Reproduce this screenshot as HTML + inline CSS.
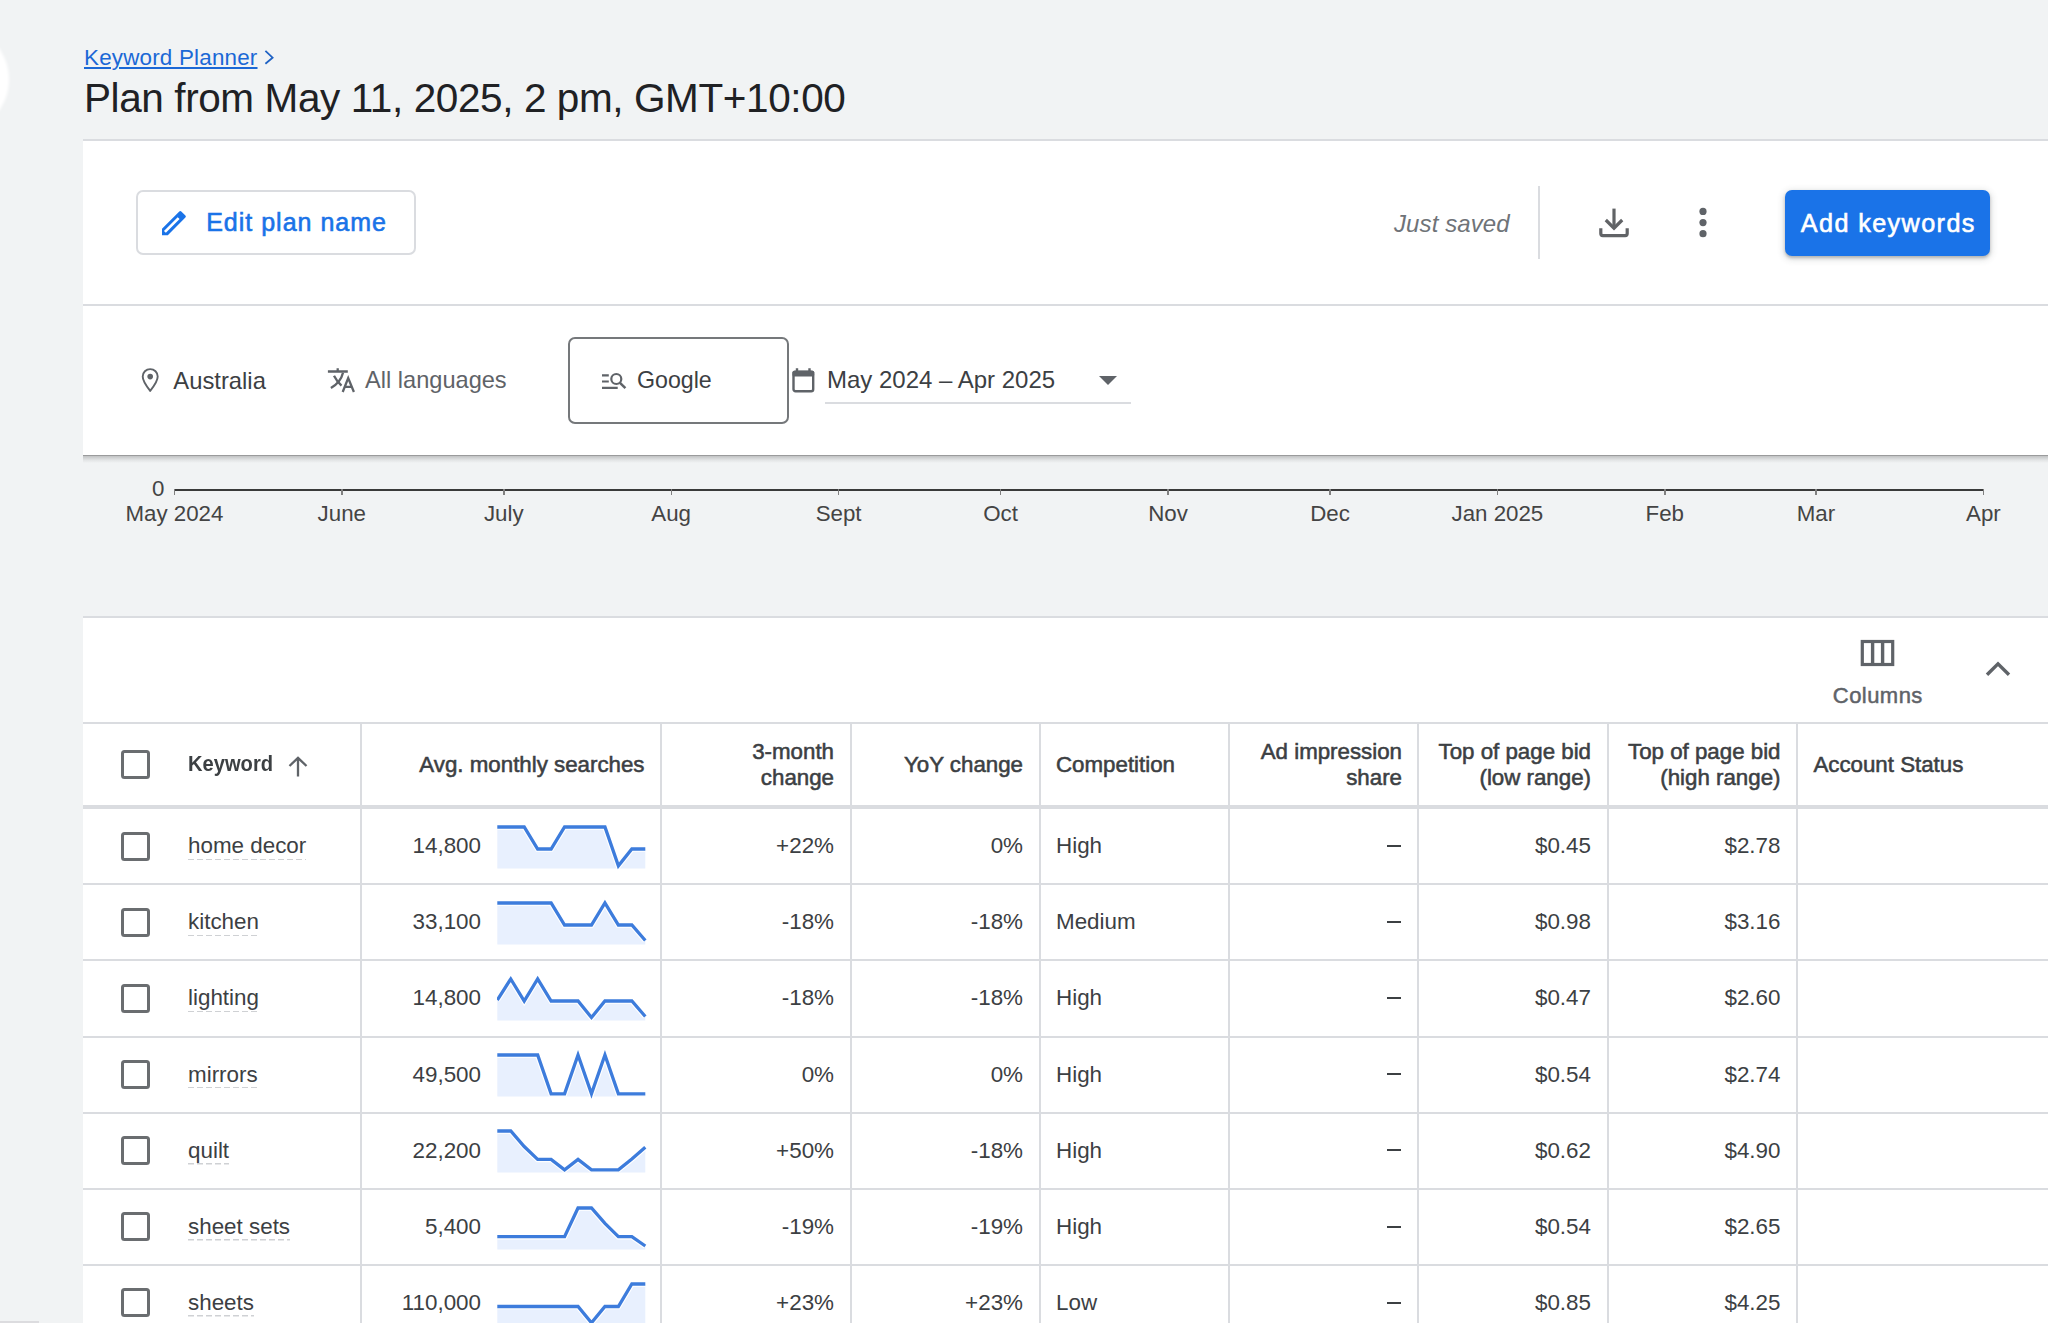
<!DOCTYPE html>
<html><head><meta charset="utf-8"><title>Keyword Planner</title><style>
*{margin:0;padding:0;box-sizing:content-box}
html,body{width:2048px;height:1323px;overflow:hidden;background:#f1f3f4;font-family:"Liberation Sans", sans-serif;position:relative}
.t{position:absolute;white-space:nowrap}
.blob{position:absolute;left:-100px;top:24.5px;width:109px;height:109px;border-radius:50%;background:#fff;filter:blur(1.5px)}
.sb{position:absolute;left:0;top:1321px;width:39px;height:2px;background:#dcdcdf}
.card1{position:absolute;left:83px;top:139px;width:1965px;height:316px;background:#fff;border-top:2px solid #dadce0;box-sizing:border-box}
.sh1{position:absolute;left:83px;top:455px;width:1965px;height:1.2px;background:rgba(0,0,0,.36)}
.sh2{position:absolute;left:83px;top:456.2px;width:1965px;height:6.5px;background:linear-gradient(rgba(0,0,0,.2),rgba(0,0,0,.06) 60%,rgba(0,0,0,0))}
.card2{position:absolute;left:83px;top:616px;width:1965px;height:720px;background:#fff;border-top:2px solid #dadce0;box-sizing:border-box}
</style></head>
<body>
<div class="blob"></div>
<div class="sb"></div>
<div class="t" style="left:84px;top:46.94px;font-size:22.4px;line-height:22.4px;color:#1b68d6;font-weight:400;font-style:normal;letter-spacing:0.2px;text-decoration:underline;text-decoration-thickness:1.5px;text-underline-offset:2px;">Keyword Planner</div>
<svg style="position:absolute;left:262px;top:48px" width="14" height="20" viewBox="0 0 14 20"><path d="M3.4 2.8 L10.6 9.6 L3.4 15.7" fill="none" stroke="#1f62c4" stroke-width="1.8"/></svg>
<div class="t" style="left:84px;top:77.72px;font-size:40.5px;line-height:40.5px;color:#202124;font-weight:400;font-style:normal;letter-spacing:-0.4px;">Plan from May 11, 2025, 2 pm, GMT+10:00</div>
<div class="card1"></div><div class="sh1"></div><div class="sh2"></div>
<div style="position:absolute;left:83px;top:304px;width:1965px;height:2px;background:#dadce0"></div>
<div style="position:absolute;left:136px;top:190px;width:276px;height:61px;border:2px solid #dadce0;border-radius:7px"></div>
<svg style="position:absolute;left:159px;top:207px" width="30" height="30" viewBox="0 0 30 30"><path fill-rule="evenodd" d="M3 21.8 L20.3 4.5 Q21.3 3.5 22.3 4.5 L26.4 8.6 Q27.4 9.6 26.4 10.6 L8.8 28.2 L3 28.2 Z M4.95 23.95 L6.85 25.85 L20.6 12.1 L18.7 10.2 Z" fill="#1a73e8"/></svg>
<div class="t" style="left:206.2px;top:209.84px;font-size:25px;line-height:25px;color:#1a73e8;font-weight:400;font-style:normal;letter-spacing:1.0px;-webkit-text-stroke:0.6px #1a73e8;">Edit plan name</div>
<div class="t" style="left:1394px;top:211.58px;font-size:24px;line-height:24px;color:#6f7378;font-weight:400;font-style:italic;letter-spacing:0.1px;">Just saved</div>
<div style="position:absolute;left:1538px;top:186px;width:2px;height:73px;background:#dadce0"></div>
<svg style="position:absolute;left:1596px;top:205px" width="36" height="36" viewBox="0 0 36 36"><g fill="none" stroke="#616366" stroke-width="3.2"><path d="M18 3.6 V22.5"/><path d="M9.8 15 L18 23.2 L26.2 15"/><path d="M4.8 23.2 V28.6 Q4.8 30.6 6.8 30.6 H29.2 Q31.2 30.6 31.2 28.6 V23.2"/></g></svg>
<svg style="position:absolute;left:1693px;top:203px" width="20" height="40" viewBox="0 0 20 40"><circle cx="10" cy="8.4" r="3.6" fill="#5f6368"/><circle cx="10" cy="19.6" r="3.6" fill="#5f6368"/><circle cx="10" cy="30.7" r="3.6" fill="#5f6368"/></svg>
<div style="position:absolute;left:1785px;top:190px;width:205px;height:66px;background:#1a73e8;border-radius:7px;box-shadow:0 2px 3px rgba(60,64,67,.3),0 2px 6px 2px rgba(60,64,67,.15)"></div>
<div class="t" style="left:1800.8px;top:210.67px;font-size:25.2px;line-height:25.2px;color:#ffffff;font-weight:400;font-style:normal;letter-spacing:1.4px;-webkit-text-stroke:0.6px #ffffff;">Add keywords</div>
<svg style="position:absolute;left:138px;top:366px" width="24" height="28" viewBox="0 0 24 28"><path d="M12.2 24.9 C12.2 24.9 4.7 15.6 4.7 10.6 A7.5 7.5 0 0 1 19.7 10.6 C19.7 15.6 12.2 24.9 12.2 24.9 Z" fill="none" stroke="#5f6368" stroke-width="1.9" stroke-linejoin="round"/><circle cx="12.2" cy="10.6" r="2.8" fill="#5f6368"/></svg>
<div class="t" style="left:173.3px;top:368.85px;font-size:23.8px;line-height:23.8px;color:#3c4043;font-weight:400;font-style:normal;letter-spacing:0px;">Australia</div>
<svg style="position:absolute;left:326px;top:366px" width="32" height="30" viewBox="0 0 32 30"><g fill="none" stroke="#5f6368" stroke-width="2.3"><path d="M1.9 5.5 H21.8 M11.7 2.2 V5.5"/><path d="M17 6.7 Q14.8 16 4.9 22.1"/><path d="M8 9.7 Q11 15.5 15.5 19.7"/><path d="M16.7 26 L22.2 12.1 L27.9 26 M18.7 20.9 H25.8"/></g></svg>
<div class="t" style="left:365px;top:369.02px;font-size:23.6px;line-height:23.6px;color:#5f6368;font-weight:400;font-style:normal;letter-spacing:0px;">All languages</div>
<div style="position:absolute;left:568px;top:336.6px;width:216.5px;height:83.4px;border:2px solid #75787b;border-radius:7px"></div>
<svg style="position:absolute;left:599px;top:370px" width="30" height="22" viewBox="0 0 30 22"><path d="M3 5.4 H9.8 M3 11.5 H9.8 M3 17.8 H18.7" stroke="#5f6368" stroke-width="2.2"/><circle cx="17.3" cy="9" r="5" fill="none" stroke="#5f6368" stroke-width="2.2"/><path d="M21 12.8 L26.4 18.2" stroke="#5f6368" stroke-width="2.5"/></svg>
<div class="t" style="left:637px;top:369.36px;font-size:23.2px;line-height:23.2px;color:#3c4043;font-weight:400;font-style:normal;letter-spacing:0px;">Google</div>
<svg style="position:absolute;left:790px;top:366px" width="26" height="28" viewBox="0 0 26 28"><rect x="3.5" y="5.8" width="19.7" height="19.4" rx="2" fill="none" stroke="#5f6368" stroke-width="2.4"/><rect x="2.5" y="4.8" width="21.7" height="5.6" rx="1.5" fill="#5f6368"/><path d="M7 2.2 V6 M19.5 2.2 V6" stroke="#5f6368" stroke-width="2.4"/></svg>
<div class="t" style="left:827px;top:367.68px;font-size:24.0px;line-height:24.0px;color:#3c4043;font-weight:400;font-style:normal;letter-spacing:0px;">May 2024 – Apr 2025</div>
<svg style="position:absolute;left:1097px;top:374px" width="22" height="13" viewBox="0 0 22 13"><path d="M2 2 H20 L11 11 Z" fill="#5f6368"/></svg>
<div style="position:absolute;left:825px;top:402px;width:306px;height:2px;background:#dadce0"></div>
<div style="position:absolute;left:174px;top:488.5px;width:1810px;height:2.4px;background:#3a3a3a"></div>
<div style="position:absolute;left:173.7px;top:489px;width:1.6px;height:6px;background:#808080"></div>
<div class="t" style="left:-125.60000000000002px;width:600px;text-align:center;top:502.72px;font-size:22.3px;line-height:22.3px;color:#444444;font-weight:400;font-style:normal;letter-spacing:0px;">May 2024</div>
<div style="position:absolute;left:341.1px;top:489px;width:1.6px;height:6px;background:#808080"></div>
<div class="t" style="left:41.80000000000001px;width:600px;text-align:center;top:502.72px;font-size:22.3px;line-height:22.3px;color:#444444;font-weight:400;font-style:normal;letter-spacing:0px;">June</div>
<div style="position:absolute;left:503.1px;top:489px;width:1.6px;height:6px;background:#808080"></div>
<div class="t" style="left:203.8px;width:600px;text-align:center;top:502.72px;font-size:22.3px;line-height:22.3px;color:#444444;font-weight:400;font-style:normal;letter-spacing:0px;">July</div>
<div style="position:absolute;left:670.5px;top:489px;width:1.6px;height:6px;background:#808080"></div>
<div class="t" style="left:371.20000000000005px;width:600px;text-align:center;top:502.72px;font-size:22.3px;line-height:22.3px;color:#444444;font-weight:400;font-style:normal;letter-spacing:0px;">Aug</div>
<div style="position:absolute;left:837.9px;top:489px;width:1.6px;height:6px;background:#808080"></div>
<div class="t" style="left:538.6000000000001px;width:600px;text-align:center;top:502.72px;font-size:22.3px;line-height:22.3px;color:#444444;font-weight:400;font-style:normal;letter-spacing:0px;">Sept</div>
<div style="position:absolute;left:999.9px;top:489px;width:1.6px;height:6px;background:#808080"></div>
<div class="t" style="left:700.6000000000001px;width:600px;text-align:center;top:502.72px;font-size:22.3px;line-height:22.3px;color:#444444;font-weight:400;font-style:normal;letter-spacing:0px;">Oct</div>
<div style="position:absolute;left:1167.3px;top:489px;width:1.6px;height:6px;background:#808080"></div>
<div class="t" style="left:868.0px;width:600px;text-align:center;top:502.72px;font-size:22.3px;line-height:22.3px;color:#444444;font-weight:400;font-style:normal;letter-spacing:0px;">Nov</div>
<div style="position:absolute;left:1329.3px;top:489px;width:1.6px;height:6px;background:#808080"></div>
<div class="t" style="left:1030.0000000000002px;width:600px;text-align:center;top:502.72px;font-size:22.3px;line-height:22.3px;color:#444444;font-weight:400;font-style:normal;letter-spacing:0px;">Dec</div>
<div style="position:absolute;left:1496.7px;top:489px;width:1.6px;height:6px;background:#808080"></div>
<div class="t" style="left:1197.4px;width:600px;text-align:center;top:502.72px;font-size:22.3px;line-height:22.3px;color:#444444;font-weight:400;font-style:normal;letter-spacing:0px;">Jan 2025</div>
<div style="position:absolute;left:1664.1px;top:489px;width:1.6px;height:6px;background:#808080"></div>
<div class="t" style="left:1364.8000000000002px;width:600px;text-align:center;top:502.72px;font-size:22.3px;line-height:22.3px;color:#444444;font-weight:400;font-style:normal;letter-spacing:0px;">Feb</div>
<div style="position:absolute;left:1815.3px;top:489px;width:1.6px;height:6px;background:#808080"></div>
<div class="t" style="left:1516.0000000000002px;width:600px;text-align:center;top:502.72px;font-size:22.3px;line-height:22.3px;color:#444444;font-weight:400;font-style:normal;letter-spacing:0px;">Mar</div>
<div style="position:absolute;left:1982.7px;top:489px;width:1.6px;height:6px;background:#808080"></div>
<div class="t" style="left:1683.4000000000003px;width:600px;text-align:center;top:502.72px;font-size:22.3px;line-height:22.3px;color:#444444;font-weight:400;font-style:normal;letter-spacing:0px;">Apr</div>
<div class="t" style="right:1883.5px;text-align:right;top:478.12px;font-size:22.3px;line-height:22.3px;color:#444444;font-weight:400;font-style:normal;letter-spacing:0px;">0</div>
<div class="card2"></div>
<svg style="position:absolute;left:1858px;top:637px" width="40" height="32" viewBox="0 0 40 32"><rect x="4.3" y="4.5" width="30.4" height="23" fill="none" stroke="#5f6368" stroke-width="3.2"/><path d="M14.6 4.5 V27.5 M24.6 4.5 V27.5" stroke="#5f6368" stroke-width="3.4"/></svg>
<div class="t" style="left:1577.8px;width:600px;text-align:center;top:685.38px;font-size:22px;line-height:22px;color:#5f6368;font-weight:400;font-style:normal;letter-spacing:0px;-webkit-text-stroke:0.5px #5f6368;letter-spacing:0.45px;">Columns</div>
<svg style="position:absolute;left:1984px;top:658px" width="28" height="22" viewBox="0 0 28 22"><path d="M3 16.8 L14 5.8 L25 16.8" fill="none" stroke="#5f6368" stroke-width="3.4"/></svg>
<div style="position:absolute;left:83px;top:722px;width:1965px;height:2px;background:#dadce0"></div>
<div style="position:absolute;left:83px;top:805px;width:1965px;height:4px;background:#dadce0"></div>
<div style="position:absolute;left:83px;top:883.30px;width:1965px;height:2px;background:#dadce0"></div>
<div style="position:absolute;left:83px;top:959.40px;width:1965px;height:2px;background:#dadce0"></div>
<div style="position:absolute;left:83px;top:1035.50px;width:1965px;height:2px;background:#dadce0"></div>
<div style="position:absolute;left:83px;top:1111.60px;width:1965px;height:2px;background:#dadce0"></div>
<div style="position:absolute;left:83px;top:1187.70px;width:1965px;height:2px;background:#dadce0"></div>
<div style="position:absolute;left:83px;top:1263.80px;width:1965px;height:2px;background:#dadce0"></div>
<div style="position:absolute;left:360.3px;top:724px;width:2px;height:600px;background:#dadce0"></div>
<div style="position:absolute;left:660.3px;top:724px;width:2px;height:600px;background:#dadce0"></div>
<div style="position:absolute;left:850.3px;top:724px;width:2px;height:600px;background:#dadce0"></div>
<div style="position:absolute;left:1039.3px;top:724px;width:2px;height:600px;background:#dadce0"></div>
<div style="position:absolute;left:1228.3px;top:724px;width:2px;height:600px;background:#dadce0"></div>
<div style="position:absolute;left:1417.3px;top:724px;width:2px;height:600px;background:#dadce0"></div>
<div style="position:absolute;left:1606.5px;top:724px;width:2px;height:600px;background:#dadce0"></div>
<div style="position:absolute;left:1795.8px;top:724px;width:2px;height:600px;background:#dadce0"></div>
<div style="position:absolute;left:121px;top:750px;width:23px;height:23px;border:3px solid #6a6d70;border-radius:3.5px"></div>
<div class="t" style="left:188px;top:753.38px;font-size:22px;line-height:22px;color:#3c4043;font-weight:700;font-style:normal;letter-spacing:0px;transform:scaleX(0.915);transform-origin:0 0;">Keyword</div>
<svg style="position:absolute;left:285px;top:754px" width="26" height="26" viewBox="0 0 26 26"><path d="M13 22.5 V4 M4.5 12 L13 3.8 L21.5 12" fill="none" stroke="#5f6368" stroke-width="2.3"/></svg>
<div class="t" style="right:1403.5px;text-align:right;top:753.62px;font-size:22.3px;line-height:22.3px;color:#3c4043;font-weight:400;font-style:normal;letter-spacing:0px;-webkit-text-stroke:0.55px #3c4043;">Avg. monthly searches</div>
<div class="t" style="right:1214px;text-align:right;top:740.72px;font-size:22.3px;line-height:22.3px;color:#3c4043;font-weight:400;font-style:normal;letter-spacing:0px;-webkit-text-stroke:0.55px #3c4043;">3-month</div>
<div class="t" style="right:1214px;text-align:right;top:766.62px;font-size:22.3px;line-height:22.3px;color:#3c4043;font-weight:400;font-style:normal;letter-spacing:0px;-webkit-text-stroke:0.55px #3c4043;">change</div>
<div class="t" style="right:1025px;text-align:right;top:753.62px;font-size:22.3px;line-height:22.3px;color:#3c4043;font-weight:400;font-style:normal;letter-spacing:0px;-webkit-text-stroke:0.55px #3c4043;">YoY change</div>
<div class="t" style="left:1056px;top:753.62px;font-size:22.3px;line-height:22.3px;color:#3c4043;font-weight:400;font-style:normal;letter-spacing:0px;-webkit-text-stroke:0.55px #3c4043;">Competition</div>
<div class="t" style="right:646px;text-align:right;top:740.72px;font-size:22.3px;line-height:22.3px;color:#3c4043;font-weight:400;font-style:normal;letter-spacing:0px;-webkit-text-stroke:0.55px #3c4043;">Ad impression</div>
<div class="t" style="right:646px;text-align:right;top:766.62px;font-size:22.3px;line-height:22.3px;color:#3c4043;font-weight:400;font-style:normal;letter-spacing:0px;-webkit-text-stroke:0.55px #3c4043;">share</div>
<div class="t" style="right:457px;text-align:right;top:740.72px;font-size:22.3px;line-height:22.3px;color:#3c4043;font-weight:400;font-style:normal;letter-spacing:0px;-webkit-text-stroke:0.55px #3c4043;">Top of page bid</div>
<div class="t" style="right:457px;text-align:right;top:766.62px;font-size:22.3px;line-height:22.3px;color:#3c4043;font-weight:400;font-style:normal;letter-spacing:0px;-webkit-text-stroke:0.55px #3c4043;">(low range)</div>
<div class="t" style="right:267.5px;text-align:right;top:740.72px;font-size:22.3px;line-height:22.3px;color:#3c4043;font-weight:400;font-style:normal;letter-spacing:0px;-webkit-text-stroke:0.55px #3c4043;">Top of page bid</div>
<div class="t" style="right:267.5px;text-align:right;top:766.62px;font-size:22.3px;line-height:22.3px;color:#3c4043;font-weight:400;font-style:normal;letter-spacing:0px;-webkit-text-stroke:0.55px #3c4043;">(high range)</div>
<div class="t" style="left:1813.4px;top:753.62px;font-size:22.3px;line-height:22.3px;color:#3c4043;font-weight:400;font-style:normal;letter-spacing:0px;-webkit-text-stroke:0.55px #3c4043;">Account Status</div>
<div style="position:absolute;left:121px;top:831.5px;width:23px;height:23px;border:3px solid #6a6d70;border-radius:3.5px"></div>
<div class="t" style="left:188px;top:835.24px;font-size:22.4px;line-height:22.4px;color:#3c4043;font-weight:400;font-style:normal;letter-spacing:0px;padding-bottom:2.5px;background:repeating-linear-gradient(90deg,#cfd1d4 0 6px,transparent 6px 9px) left bottom/100% 1.5px no-repeat;">home decor</div>
<div class="t" style="right:1567px;text-align:right;top:835.24px;font-size:22.4px;line-height:22.4px;color:#3c4043;font-weight:400;font-style:normal;letter-spacing:0px;">14,800</div>
<div class="t" style="right:1214px;text-align:right;top:835.24px;font-size:22.4px;line-height:22.4px;color:#3c4043;font-weight:400;font-style:normal;letter-spacing:0px;">+22%</div>
<div class="t" style="right:1025px;text-align:right;top:835.24px;font-size:22.4px;line-height:22.4px;color:#3c4043;font-weight:400;font-style:normal;letter-spacing:0px;">0%</div>
<div class="t" style="left:1056px;top:835.24px;font-size:22.4px;line-height:22.4px;color:#3c4043;font-weight:400;font-style:normal;letter-spacing:0px;">High</div>
<div style="position:absolute;left:1387px;top:845.0px;width:14px;height:2px;background:#3c4043"></div>
<div class="t" style="right:457px;text-align:right;top:835.24px;font-size:22.4px;line-height:22.4px;color:#3c4043;font-weight:400;font-style:normal;letter-spacing:0px;">$0.45</div>
<div class="t" style="right:267.5px;text-align:right;top:835.24px;font-size:22.4px;line-height:22.4px;color:#3c4043;font-weight:400;font-style:normal;letter-spacing:0px;">$2.78</div>
<svg style="position:absolute;left:497px;top:808.0px" width="150" height="76" viewBox="0 0 150 76"><polygon points="0.3,60.5 0.30,19 13.75,19 27.21,19 40.66,41 54.12,41 67.57,19 81.03,19 94.48,19 107.94,19 121.39,57.8 134.85,41 148.30,41 148.30,60.5" fill="#e8f0fe"/><polyline points="0.30,19 13.75,19 27.21,19 40.66,41 54.12,41 67.57,19 81.03,19 94.48,19 107.94,19 121.39,57.8 134.85,41 148.30,41" fill="none" stroke="#ffffff" stroke-width="5.6" stroke-linejoin="miter"/><polyline points="0.30,19 13.75,19 27.21,19 40.66,41 54.12,41 67.57,19 81.03,19 94.48,19 107.94,19 121.39,57.8 134.85,41 148.30,41" fill="none" stroke="#3d7cdc" stroke-width="3.3" stroke-linejoin="miter"/></svg>
<div style="position:absolute;left:121px;top:907.6px;width:23px;height:23px;border:3px solid #6a6d70;border-radius:3.5px"></div>
<div class="t" style="left:188px;top:911.34px;font-size:22.4px;line-height:22.4px;color:#3c4043;font-weight:400;font-style:normal;letter-spacing:0px;padding-bottom:2.5px;background:repeating-linear-gradient(90deg,#cfd1d4 0 6px,transparent 6px 9px) left bottom/100% 1.5px no-repeat;">kitchen</div>
<div class="t" style="right:1567px;text-align:right;top:911.34px;font-size:22.4px;line-height:22.4px;color:#3c4043;font-weight:400;font-style:normal;letter-spacing:0px;">33,100</div>
<div class="t" style="right:1214px;text-align:right;top:911.34px;font-size:22.4px;line-height:22.4px;color:#3c4043;font-weight:400;font-style:normal;letter-spacing:0px;">-18%</div>
<div class="t" style="right:1025px;text-align:right;top:911.34px;font-size:22.4px;line-height:22.4px;color:#3c4043;font-weight:400;font-style:normal;letter-spacing:0px;">-18%</div>
<div class="t" style="left:1056px;top:911.34px;font-size:22.4px;line-height:22.4px;color:#3c4043;font-weight:400;font-style:normal;letter-spacing:0px;">Medium</div>
<div style="position:absolute;left:1387px;top:921.1px;width:14px;height:2px;background:#3c4043"></div>
<div class="t" style="right:457px;text-align:right;top:911.34px;font-size:22.4px;line-height:22.4px;color:#3c4043;font-weight:400;font-style:normal;letter-spacing:0px;">$0.98</div>
<div class="t" style="right:267.5px;text-align:right;top:911.34px;font-size:22.4px;line-height:22.4px;color:#3c4043;font-weight:400;font-style:normal;letter-spacing:0px;">$3.16</div>
<svg style="position:absolute;left:497px;top:884.1px" width="150" height="76" viewBox="0 0 150 76"><polygon points="0.3,60.5 0.30,19 13.75,19 27.21,19 40.66,19 54.12,19 67.57,41 81.03,41 94.48,41 107.94,19 121.39,41 134.85,41 148.30,56.5 148.30,60.5" fill="#e8f0fe"/><polyline points="0.30,19 13.75,19 27.21,19 40.66,19 54.12,19 67.57,41 81.03,41 94.48,41 107.94,19 121.39,41 134.85,41 148.30,56.5" fill="none" stroke="#ffffff" stroke-width="5.6" stroke-linejoin="miter"/><polyline points="0.30,19 13.75,19 27.21,19 40.66,19 54.12,19 67.57,41 81.03,41 94.48,41 107.94,19 121.39,41 134.85,41 148.30,56.5" fill="none" stroke="#3d7cdc" stroke-width="3.3" stroke-linejoin="miter"/></svg>
<div style="position:absolute;left:121px;top:983.7px;width:23px;height:23px;border:3px solid #6a6d70;border-radius:3.5px"></div>
<div class="t" style="left:188px;top:987.44px;font-size:22.4px;line-height:22.4px;color:#3c4043;font-weight:400;font-style:normal;letter-spacing:0px;padding-bottom:2.5px;background:repeating-linear-gradient(90deg,#cfd1d4 0 6px,transparent 6px 9px) left bottom/100% 1.5px no-repeat;">lighting</div>
<div class="t" style="right:1567px;text-align:right;top:987.44px;font-size:22.4px;line-height:22.4px;color:#3c4043;font-weight:400;font-style:normal;letter-spacing:0px;">14,800</div>
<div class="t" style="right:1214px;text-align:right;top:987.44px;font-size:22.4px;line-height:22.4px;color:#3c4043;font-weight:400;font-style:normal;letter-spacing:0px;">-18%</div>
<div class="t" style="right:1025px;text-align:right;top:987.44px;font-size:22.4px;line-height:22.4px;color:#3c4043;font-weight:400;font-style:normal;letter-spacing:0px;">-18%</div>
<div class="t" style="left:1056px;top:987.44px;font-size:22.4px;line-height:22.4px;color:#3c4043;font-weight:400;font-style:normal;letter-spacing:0px;">High</div>
<div style="position:absolute;left:1387px;top:997.2px;width:14px;height:2px;background:#3c4043"></div>
<div class="t" style="right:457px;text-align:right;top:987.44px;font-size:22.4px;line-height:22.4px;color:#3c4043;font-weight:400;font-style:normal;letter-spacing:0px;">$0.47</div>
<div class="t" style="right:267.5px;text-align:right;top:987.44px;font-size:22.4px;line-height:22.4px;color:#3c4043;font-weight:400;font-style:normal;letter-spacing:0px;">$2.60</div>
<svg style="position:absolute;left:497px;top:960.2px" width="150" height="76" viewBox="0 0 150 76"><polygon points="0.3,60.5 0.30,40 13.75,19 27.21,41 40.66,19 54.12,41 67.57,41 81.03,41 94.48,57.5 107.94,41 121.39,41 134.85,41 148.30,56.5 148.30,60.5" fill="#e8f0fe"/><polyline points="0.30,40 13.75,19 27.21,41 40.66,19 54.12,41 67.57,41 81.03,41 94.48,57.5 107.94,41 121.39,41 134.85,41 148.30,56.5" fill="none" stroke="#ffffff" stroke-width="5.6" stroke-linejoin="miter"/><polyline points="0.30,40 13.75,19 27.21,41 40.66,19 54.12,41 67.57,41 81.03,41 94.48,57.5 107.94,41 121.39,41 134.85,41 148.30,56.5" fill="none" stroke="#3d7cdc" stroke-width="3.3" stroke-linejoin="miter"/></svg>
<div style="position:absolute;left:121px;top:1059.8px;width:23px;height:23px;border:3px solid #6a6d70;border-radius:3.5px"></div>
<div class="t" style="left:188px;top:1063.54px;font-size:22.4px;line-height:22.4px;color:#3c4043;font-weight:400;font-style:normal;letter-spacing:0px;padding-bottom:2.5px;background:repeating-linear-gradient(90deg,#cfd1d4 0 6px,transparent 6px 9px) left bottom/100% 1.5px no-repeat;">mirrors</div>
<div class="t" style="right:1567px;text-align:right;top:1063.54px;font-size:22.4px;line-height:22.4px;color:#3c4043;font-weight:400;font-style:normal;letter-spacing:0px;">49,500</div>
<div class="t" style="right:1214px;text-align:right;top:1063.54px;font-size:22.4px;line-height:22.4px;color:#3c4043;font-weight:400;font-style:normal;letter-spacing:0px;">0%</div>
<div class="t" style="right:1025px;text-align:right;top:1063.54px;font-size:22.4px;line-height:22.4px;color:#3c4043;font-weight:400;font-style:normal;letter-spacing:0px;">0%</div>
<div class="t" style="left:1056px;top:1063.54px;font-size:22.4px;line-height:22.4px;color:#3c4043;font-weight:400;font-style:normal;letter-spacing:0px;">High</div>
<div style="position:absolute;left:1387px;top:1073.3px;width:14px;height:2px;background:#3c4043"></div>
<div class="t" style="right:457px;text-align:right;top:1063.54px;font-size:22.4px;line-height:22.4px;color:#3c4043;font-weight:400;font-style:normal;letter-spacing:0px;">$0.54</div>
<div class="t" style="right:267.5px;text-align:right;top:1063.54px;font-size:22.4px;line-height:22.4px;color:#3c4043;font-weight:400;font-style:normal;letter-spacing:0px;">$2.74</div>
<svg style="position:absolute;left:497px;top:1036.3px" width="150" height="76" viewBox="0 0 150 76"><polygon points="0.3,60.5 0.30,19 13.75,19 27.21,19 40.66,19 54.12,57.8 67.57,57.8 81.03,19 94.48,57.8 107.94,19 121.39,57.8 134.85,57.8 148.30,57.8 148.30,60.5" fill="#e8f0fe"/><polyline points="0.30,19 13.75,19 27.21,19 40.66,19 54.12,57.8 67.57,57.8 81.03,19 94.48,57.8 107.94,19 121.39,57.8 134.85,57.8 148.30,57.8" fill="none" stroke="#ffffff" stroke-width="5.6" stroke-linejoin="miter"/><polyline points="0.30,19 13.75,19 27.21,19 40.66,19 54.12,57.8 67.57,57.8 81.03,19 94.48,57.8 107.94,19 121.39,57.8 134.85,57.8 148.30,57.8" fill="none" stroke="#3d7cdc" stroke-width="3.3" stroke-linejoin="miter"/></svg>
<div style="position:absolute;left:121px;top:1135.9px;width:23px;height:23px;border:3px solid #6a6d70;border-radius:3.5px"></div>
<div class="t" style="left:188px;top:1139.64px;font-size:22.4px;line-height:22.4px;color:#3c4043;font-weight:400;font-style:normal;letter-spacing:0px;padding-bottom:2.5px;background:repeating-linear-gradient(90deg,#cfd1d4 0 6px,transparent 6px 9px) left bottom/100% 1.5px no-repeat;">quilt</div>
<div class="t" style="right:1567px;text-align:right;top:1139.64px;font-size:22.4px;line-height:22.4px;color:#3c4043;font-weight:400;font-style:normal;letter-spacing:0px;">22,200</div>
<div class="t" style="right:1214px;text-align:right;top:1139.64px;font-size:22.4px;line-height:22.4px;color:#3c4043;font-weight:400;font-style:normal;letter-spacing:0px;">+50%</div>
<div class="t" style="right:1025px;text-align:right;top:1139.64px;font-size:22.4px;line-height:22.4px;color:#3c4043;font-weight:400;font-style:normal;letter-spacing:0px;">-18%</div>
<div class="t" style="left:1056px;top:1139.64px;font-size:22.4px;line-height:22.4px;color:#3c4043;font-weight:400;font-style:normal;letter-spacing:0px;">High</div>
<div style="position:absolute;left:1387px;top:1149.4px;width:14px;height:2px;background:#3c4043"></div>
<div class="t" style="right:457px;text-align:right;top:1139.64px;font-size:22.4px;line-height:22.4px;color:#3c4043;font-weight:400;font-style:normal;letter-spacing:0px;">$0.62</div>
<div class="t" style="right:267.5px;text-align:right;top:1139.64px;font-size:22.4px;line-height:22.4px;color:#3c4043;font-weight:400;font-style:normal;letter-spacing:0px;">$4.90</div>
<svg style="position:absolute;left:497px;top:1112.4px" width="150" height="76" viewBox="0 0 150 76"><polygon points="0.3,60.5 0.30,19 13.75,19 27.21,34.5 40.66,47.4 54.12,47.4 67.57,57.8 81.03,47.4 94.48,57.8 107.94,57.8 121.39,57.8 134.85,47 148.30,35.3 148.30,60.5" fill="#e8f0fe"/><polyline points="0.30,19 13.75,19 27.21,34.5 40.66,47.4 54.12,47.4 67.57,57.8 81.03,47.4 94.48,57.8 107.94,57.8 121.39,57.8 134.85,47 148.30,35.3" fill="none" stroke="#ffffff" stroke-width="5.6" stroke-linejoin="miter"/><polyline points="0.30,19 13.75,19 27.21,34.5 40.66,47.4 54.12,47.4 67.57,57.8 81.03,47.4 94.48,57.8 107.94,57.8 121.39,57.8 134.85,47 148.30,35.3" fill="none" stroke="#3d7cdc" stroke-width="3.3" stroke-linejoin="miter"/></svg>
<div style="position:absolute;left:121px;top:1212.0px;width:23px;height:23px;border:3px solid #6a6d70;border-radius:3.5px"></div>
<div class="t" style="left:188px;top:1215.74px;font-size:22.4px;line-height:22.4px;color:#3c4043;font-weight:400;font-style:normal;letter-spacing:0px;padding-bottom:2.5px;background:repeating-linear-gradient(90deg,#cfd1d4 0 6px,transparent 6px 9px) left bottom/100% 1.5px no-repeat;">sheet sets</div>
<div class="t" style="right:1567px;text-align:right;top:1215.74px;font-size:22.4px;line-height:22.4px;color:#3c4043;font-weight:400;font-style:normal;letter-spacing:0px;">5,400</div>
<div class="t" style="right:1214px;text-align:right;top:1215.74px;font-size:22.4px;line-height:22.4px;color:#3c4043;font-weight:400;font-style:normal;letter-spacing:0px;">-19%</div>
<div class="t" style="right:1025px;text-align:right;top:1215.74px;font-size:22.4px;line-height:22.4px;color:#3c4043;font-weight:400;font-style:normal;letter-spacing:0px;">-19%</div>
<div class="t" style="left:1056px;top:1215.74px;font-size:22.4px;line-height:22.4px;color:#3c4043;font-weight:400;font-style:normal;letter-spacing:0px;">High</div>
<div style="position:absolute;left:1387px;top:1225.5px;width:14px;height:2px;background:#3c4043"></div>
<div class="t" style="right:457px;text-align:right;top:1215.74px;font-size:22.4px;line-height:22.4px;color:#3c4043;font-weight:400;font-style:normal;letter-spacing:0px;">$0.54</div>
<div class="t" style="right:267.5px;text-align:right;top:1215.74px;font-size:22.4px;line-height:22.4px;color:#3c4043;font-weight:400;font-style:normal;letter-spacing:0px;">$2.65</div>
<svg style="position:absolute;left:497px;top:1188.5px" width="150" height="76" viewBox="0 0 150 76"><polygon points="0.3,60.5 0.30,47.6 13.75,47.6 27.21,47.6 40.66,47.6 54.12,47.6 67.57,47.6 81.03,19 94.48,19 107.94,34.4 121.39,47.6 134.85,47.6 148.30,57 148.30,60.5" fill="#e8f0fe"/><polyline points="0.30,47.6 13.75,47.6 27.21,47.6 40.66,47.6 54.12,47.6 67.57,47.6 81.03,19 94.48,19 107.94,34.4 121.39,47.6 134.85,47.6 148.30,57" fill="none" stroke="#ffffff" stroke-width="5.6" stroke-linejoin="miter"/><polyline points="0.30,47.6 13.75,47.6 27.21,47.6 40.66,47.6 54.12,47.6 67.57,47.6 81.03,19 94.48,19 107.94,34.4 121.39,47.6 134.85,47.6 148.30,57" fill="none" stroke="#3d7cdc" stroke-width="3.3" stroke-linejoin="miter"/></svg>
<div style="position:absolute;left:121px;top:1288.1px;width:23px;height:23px;border:3px solid #6a6d70;border-radius:3.5px"></div>
<div class="t" style="left:188px;top:1291.84px;font-size:22.4px;line-height:22.4px;color:#3c4043;font-weight:400;font-style:normal;letter-spacing:0px;padding-bottom:2.5px;background:repeating-linear-gradient(90deg,#cfd1d4 0 6px,transparent 6px 9px) left bottom/100% 1.5px no-repeat;">sheets</div>
<div class="t" style="right:1567px;text-align:right;top:1291.84px;font-size:22.4px;line-height:22.4px;color:#3c4043;font-weight:400;font-style:normal;letter-spacing:0px;">110,000</div>
<div class="t" style="right:1214px;text-align:right;top:1291.84px;font-size:22.4px;line-height:22.4px;color:#3c4043;font-weight:400;font-style:normal;letter-spacing:0px;">+23%</div>
<div class="t" style="right:1025px;text-align:right;top:1291.84px;font-size:22.4px;line-height:22.4px;color:#3c4043;font-weight:400;font-style:normal;letter-spacing:0px;">+23%</div>
<div class="t" style="left:1056px;top:1291.84px;font-size:22.4px;line-height:22.4px;color:#3c4043;font-weight:400;font-style:normal;letter-spacing:0px;">Low</div>
<div style="position:absolute;left:1387px;top:1301.6px;width:14px;height:2px;background:#3c4043"></div>
<div class="t" style="right:457px;text-align:right;top:1291.84px;font-size:22.4px;line-height:22.4px;color:#3c4043;font-weight:400;font-style:normal;letter-spacing:0px;">$0.85</div>
<div class="t" style="right:267.5px;text-align:right;top:1291.84px;font-size:22.4px;line-height:22.4px;color:#3c4043;font-weight:400;font-style:normal;letter-spacing:0px;">$4.25</div>
<svg style="position:absolute;left:497px;top:1264.6px" width="150" height="76" viewBox="0 0 150 76"><polygon points="0.3,60.5 0.30,41.5 13.75,41.5 27.21,41.5 40.66,41.5 54.12,41.5 67.57,41.5 81.03,41.5 94.48,57.8 107.94,41.5 121.39,41.5 134.85,19 148.30,19 148.30,60.5" fill="#e8f0fe"/><polyline points="0.30,41.5 13.75,41.5 27.21,41.5 40.66,41.5 54.12,41.5 67.57,41.5 81.03,41.5 94.48,57.8 107.94,41.5 121.39,41.5 134.85,19 148.30,19" fill="none" stroke="#ffffff" stroke-width="5.6" stroke-linejoin="miter"/><polyline points="0.30,41.5 13.75,41.5 27.21,41.5 40.66,41.5 54.12,41.5 67.57,41.5 81.03,41.5 94.48,57.8 107.94,41.5 121.39,41.5 134.85,19 148.30,19" fill="none" stroke="#3d7cdc" stroke-width="3.3" stroke-linejoin="miter"/></svg>
</body></html>
